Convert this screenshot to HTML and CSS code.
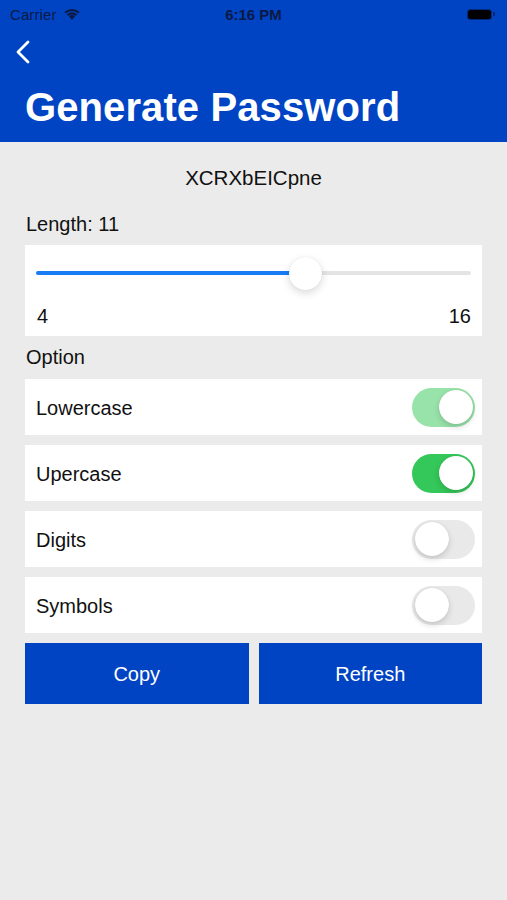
FILE: index.html
```html
<!DOCTYPE html>
<html>
<head>
<meta charset="utf-8">
<link rel="stylesheet" href="styles.css">
</head>
<body>
<header class="header">
  <div class="status">
    <div class="status-left">
      <span class="carrier">Carrier</span>
      <svg class="wifi" width="18" height="13" viewBox="0 0 17 12">
        <path d="M8.5 12 L5.6 8.9 A4.2 4.2 0 0 1 11.4 8.9 Z" fill="#0b1a45"/>
        <path d="M3.6 6.9 A7 7 0 0 1 13.4 6.9 L12.1 8.3 A5.2 5.2 0 0 0 4.9 8.3 Z" fill="#0b1a45"/>
        <path d="M1.3 4.6 A10.3 10.3 0 0 1 15.7 4.6 L14.4 6 A8.4 8.4 0 0 0 2.6 6 Z" fill="#0b1a45"/>
      </svg>
    </div>
    <span class="time">6:16 PM</span>
    <div class="status-right">
      <span class="battery"></span><span class="battery-nub"></span>
    </div>
  </div>
  <div class="nav">
    <svg class="back" width="16" height="24" viewBox="0 0 16 24">
      <path d="M13 2 L3 12 L13 22" fill="none" stroke="#fff" stroke-width="2.8" stroke-linecap="round" stroke-linejoin="round"/>
    </svg>
  </div>
  <h1 class="title">Generate Password</h1>
</header>

<main class="content">
  <div class="password">XCRXbEICpne</div>
  <div class="label length-label">Length: 11</div>
  <div class="card slider-card">
    <div class="slider">
      <div class="track"><div class="fill" style="width: 62%"></div></div>
      <div class="thumb" style="left: 62%"></div>
    </div>
    <div class="range">
      <span>4</span><span>16</span>
    </div>
  </div>
  <div class="label option-label">Option</div>
  <div class="options">
    <div class="card row"><span>Lowercase</span><span class="switch on light"><span class="knob"></span></span></div>
    <div class="card row"><span>Upercase</span><span class="switch on"><span class="knob"></span></span></div>
    <div class="card row"><span>Digits</span><span class="switch"><span class="knob"></span></span></div>
    <div class="card row"><span>Symbols</span><span class="switch"><span class="knob"></span></span></div>
  </div>
  <div class="buttons">
    <button class="btn">Copy</button>
    <button class="btn">Refresh</button>
  </div>
</main>
</body>
</html>
```

FILE: styles.css
```css
* { box-sizing: border-box; }
html, body {
  margin: 0;
  padding: 0;
}
body {
  width: 507px;
  height: 900px;
  background: #ebebeb;
  font-family: "Liberation Sans", Arial, sans-serif;
  color: #111;
  overflow: hidden;
}
.header {
  background: #0044c4;
  height: 142px;
  display: flex;
  flex-direction: column;
}
.status {
  height: 28px;
  display: grid;
  grid-template-columns: 1fr auto 1fr;
  align-items: center;
  padding: 0 10px;
  color: #0b1a45;
  font-size: 15px;
}
.status-left {
  display: flex;
  align-items: center;
  gap: 6px;
}
.carrier { letter-spacing: 0.1px; }
.wifi { margin-top: -2px; }
.time {
  font-weight: bold;
  font-size: 15px;
}
.status-right {
  display: flex;
  justify-content: flex-end;
  align-items: center;
  padding-right: 2px;
}
.battery {
  width: 23px;
  height: 9px;
  background: #000;
  border-radius: 2.5px;
  box-shadow: 0 0 0 1px rgba(0,0,0,0.35);
}
.battery-nub {
  width: 2px;
  height: 4px;
  margin-left: 2px;
  background: rgba(0,0,0,0.4);
  border-radius: 0 1px 1px 0;
}
.nav {
  height: 48px;
  display: flex;
  align-items: center;
  padding-left: 15px;
}
.title {
  margin: 0;
  padding-left: 25px;
  color: #fff;
  font-size: 40px;
  font-weight: bold;
  line-height: 46px;
  margin-top: 8px;
  letter-spacing: 0.1px;
}
.content {
  padding: 0 25px;
  display: flex;
  flex-direction: column;
}
.password {
  padding-top: 24px;
  line-height: 24px;
  font-size: 20.5px;
  text-align: center;
}
.label {
  font-size: 20px;
  line-height: 24px;
  padding-left: 1px;
}
.length-label { margin-top: 22px; }
.card { background: #fff; }
.slider-card {
  margin-top: 9px;
  height: 91px;
  padding: 0 11px;
}
.slider {
  position: relative;
  height: 56px;
  display: flex;
  align-items: center;
}
.track {
  width: 100%;
  height: 4px;
  background: #e4e4e4;
  border-radius: 2px;
}
.fill {
  height: 100%;
  background: #1a7cf5;
  border-radius: 2px;
}
.thumb {
  position: absolute;
  top: 12px;
  width: 33px;
  height: 33px;
  margin-left: -16.5px;
  border-radius: 50%;
  background: #fff;
  box-shadow: 0 3px 8px rgba(0,0,0,0.15), 0 0 1px rgba(0,0,0,0.12);
}
.range {
  display: flex;
  justify-content: space-between;
  font-size: 20px;
  line-height: 24px;
  padding: 3px 0 0 1px;
}
.option-label { margin-top: 9px; }
.options {
  margin-top: 10px;
  display: flex;
  flex-direction: column;
  gap: 10px;
}
.row {
  height: 56px;
  display: flex;
  align-items: center;
  justify-content: space-between;
  padding: 2px 7px 0 11px;
  font-size: 20px;
}
.switch {
  width: 63px;
  height: 39px;
  border-radius: 20px;
  background: #e9e9ea;
  position: relative;
  display: block;
  margin-top: -2px;
}
.switch.on { background: #34c759; }
.switch.on.light { background: #98e3a9; }
.knob {
  position: absolute;
  top: 2.5px;
  left: 2.5px;
  width: 34px;
  height: 34px;
  border-radius: 50%;
  background: #fff;
  box-shadow: 0 3px 6px rgba(0,0,0,0.15), 0 0 1px rgba(0,0,0,0.16);
}
.switch.on .knob { left: 26.5px; }
.buttons {
  margin-top: 10px;
  display: grid;
  grid-template-columns: 1fr 1fr;
  gap: 10px;
}
.btn {
  height: 61px;
  border: none;
  background: #0044c4;
  color: #fff;
  font-family: "Liberation Sans", Arial, sans-serif;
  font-size: 20px;
  padding: 2px 0 0 0;
}
```
